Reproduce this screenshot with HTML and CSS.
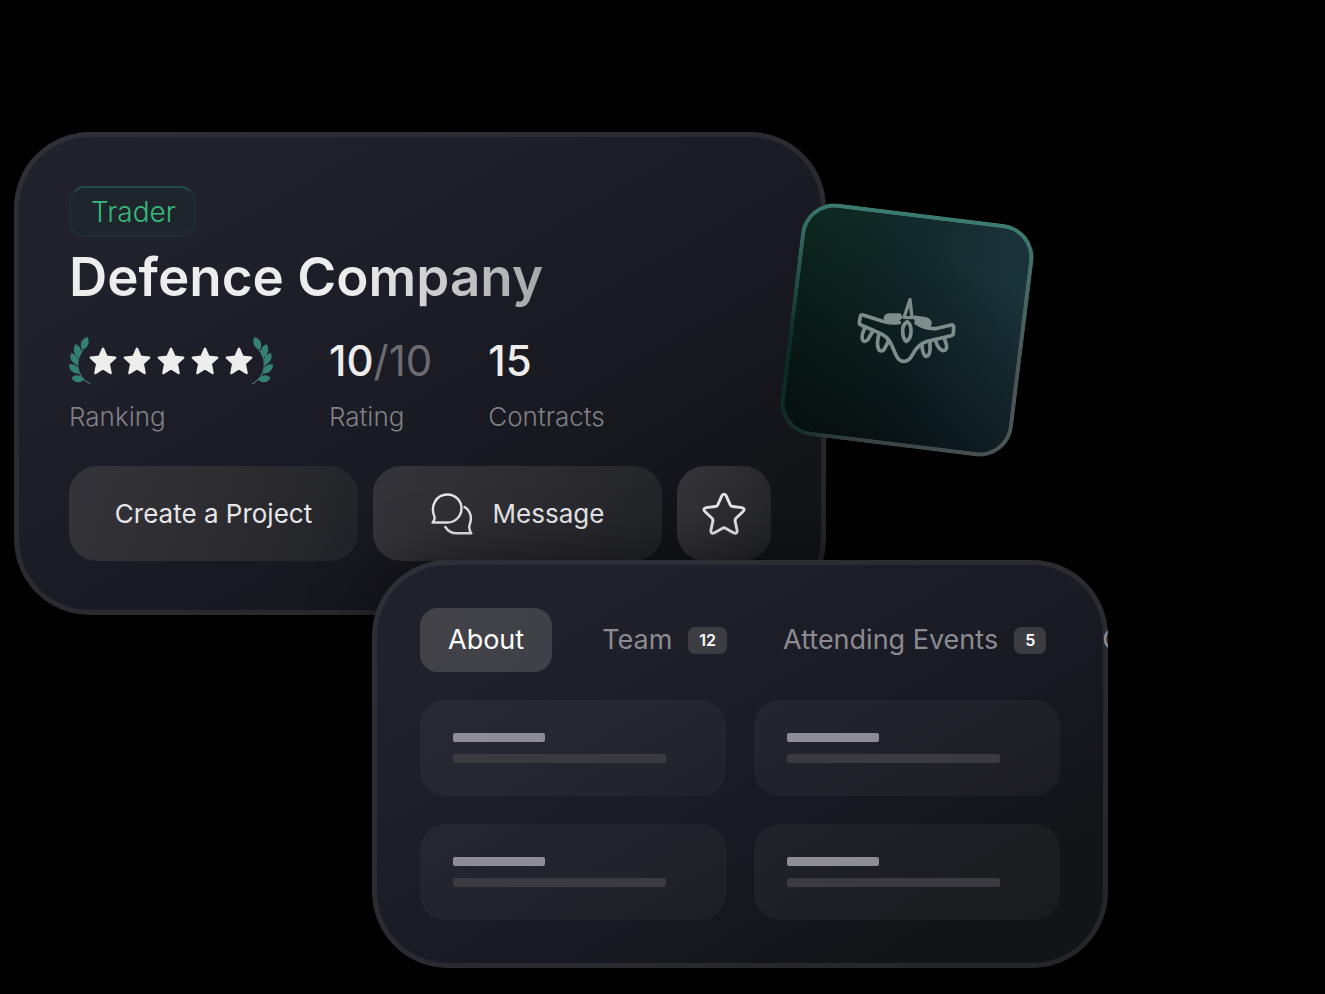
FILE: index.html
```html
<!DOCTYPE html>
<html lang="en">
<head>
    <meta charset="UTF-8">
    <meta name="viewport" content="width=device-width, initial-scale=1.0">
    <title>Defence Company</title>
    <link rel="stylesheet" href="styles.css">
</head>
<body>

    <!-- Shared shapes -->
    <svg class="defs" width="0" height="0" aria-hidden="true">
        <defs>
            <symbol id="star" viewBox="0 0 28 28">
                <path d="M14 1.8 L17.4 9.6 L26.2 10.6 L19.7 16.5 L21.6 26 L14 21.3 L6.4 26 L8.3 16.5 L1.8 10.6 L10.6 9.6 Z" fill="#ededee" stroke="#ededee" stroke-width="2.4" stroke-linejoin="round"/>
            </symbol>
            <symbol id="laurel" viewBox="0 0 22 48">
                <path d="M14 13 C6 22 6 39 21 47" fill="none" stroke="#4a6f6a" stroke-width="1.2"/>
                <g fill="#35816f">
                    <path d="M13 13 C10 6 13 1.500 18.500 0 C21 5 19.500 11 13 13 Z"/>
                    <path d="M10 21 C3.500 17 4 11 6.500 7 C12.500 10 14 15 10 21 Z"/>
                    <path d="M8.500 28.500 C1.500 25.500 0.500 20 2 16 C8 17.500 11 22 8.500 28.500 Z"/>
                    <path d="M10 36.500 C3 37 0 32 0 27.500 C6 26.500 10.500 30 10 36.500 Z"/>
                    <path d="M15 43 C10 47 5 45.500 2.500 41 C6 36.500 12 37.500 15 43 Z"/>
                </g>
            </symbol>
        </defs>
    </svg>

    <main class="showcase">

        <!-- Company Card -->
        <section class="card company">
            <span class="role">Trader</span>
            <h1><span>Defence Company</span></h1>

            <div class="stats">
                <div class="stat">
                    <div class="value ranking" role="img" aria-label="5 of 5 stars">
                        <svg width="22" height="48"><use href="#laurel"/></svg>
                        <div class="stars">
                            <svg width="28" height="28"><use href="#star"/></svg>
                            <svg width="28" height="28"><use href="#star"/></svg>
                            <svg width="28" height="28"><use href="#star"/></svg>
                            <svg width="28" height="28"><use href="#star"/></svg>
                            <svg width="28" height="28"><use href="#star"/></svg>
                        </div>
                        <svg class="flip" width="22" height="48"><use href="#laurel"/></svg>
                    </div>
                    <div class="label">Ranking</div>
                </div>
                <div class="stat">
                    <div class="value">10<span class="total">/10</span></div>
                    <div class="label">Rating</div>
                </div>
                <div class="stat">
                    <div class="value">15</div>
                    <div class="label">Contracts</div>
                </div>
            </div>

            <div class="actions">
                <button type="button">Create a Project</button>
                <button type="button">
                    <svg width="42" height="42" viewBox="0 0 42 42" fill="none" stroke="currentColor" stroke-width="2.4" stroke-linecap="round" stroke-linejoin="round">
                        <path d="M1.500 29.500 C3.500 27.500 4 25.500 3.400 23.500 C-1 13 5 1.500 16.500 1.500 C24.500 1.500 30.500 8 30.500 15.500 C30.500 23.500 24 29.500 16.500 29.500 Z"/>
                        <path d="M33.500 14 C39.500 17.500 41.500 25 38.500 32 C37.800 34.500 38.500 37.500 40.300 40.300 L26 40.300 C20.500 40.300 16.500 37.500 14.300 34"/>
                    </svg>
                    Message
                </button>
                <button type="button" class="favourite" aria-label="Add to favourites">
                    <svg width="44" height="44" viewBox="0 0 46 46" fill="none" stroke="currentColor" stroke-width="3" stroke-linejoin="round">
                        <path d="M20.700 4 Q23 0.500 25.300 4 L29.500 13.500 Q30.200 15 32 15.200 L41.500 16.300 Q45.500 17.200 43 20.300 L35.500 27.500 Q34.300 28.800 34.600 30.500 L36.700 40 Q37 44.300 33.300 42.800 L24.500 37.800 Q23 37 21.500 37.800 L12.700 42.800 Q9 44.300 9.300 40 L11.400 30.500 Q11.700 28.800 10.500 27.500 L3 20.300 Q0.500 17.200 4.500 16.300 L14 15.200 Q15.800 15 16.500 13.500 Z"/>
                    </svg>
                </button>
            </div>

            <!-- Tilted emblem over the card's right edge -->
            <div class="emblem">
                <svg width="130" height="90" viewBox="6 0 390 270" aria-hidden="true">
                    <g transform="rotate(-7 201 135)" fill="none" stroke="#7f8c8c" stroke-width="11" stroke-linejoin="round" stroke-linecap="round">
                        <path d="M178 112 Q152 117 128 109 L69 90 Q63 88 61 95 L58 111 Q57 117 63 120 L116 143 Q142 153 152 174 L168 210 Q177 230 192 229 Q207 229 218 208 Q234 178 262 169 L333 152 Q339 151 340 146 L341 126 Q341 119 334 120 L292 130 Q258 134 228 114"/>
                        <path d="M192 97 L210 44 L216 98 Z" stroke-width="10"/>
                        <path d="M136 99 Q138 90 150 90 L178 90 L182 97 L172 104 L142 105 Z" fill="#7f8c8c"/>
                        <path d="M224 97 L252 101 Q268 104 270 114 L267 124 L240 117 L230 107 Z" fill="#7f8c8c"/>
                        <path d="M202 110 C191 116 187 128 188 141 C189 156 194 166 199 170 C208 163 214 151 213 136 C213 123 209 115 202 110 Z"/>
                        <path d="M74 130 Q64 150 67 162 C70 172 80 170 84 163 L97 141"/>
                        <path d="M117 148 Q109 176 115 190 C119 201 129 200 134 190 Q143 176 145 166"/>
                        <path d="M246 182 C247 199 252 211 257 214 C265 215 269 207 270 195 L270 172"/>
                        <path d="M287 168 C292 185 300 194 309 197 C319 197 322 188 319 178 L313 160"/>
                    </g>
                </svg>
            </div>
        </section>

        <!-- Details Card -->
        <section class="card details">
            <nav class="tabs">
                <a class="tab active" href="#about">About</a>
                <a class="tab" href="#team">Team <span class="count">12</span></a>
                <a class="tab" href="#events">Attending Events <span class="count">5</span></a>
                <a class="tab" href="#contracts">C</a>
            </nav>
            <div class="tiles">
                <div class="tile"></div>
                <div class="tile"></div>
                <div class="tile"></div>
                <div class="tile"></div>
            </div>
        </section>

    </main>

</body>
</html>
```
FILE: styles.css
```css
* {
    box-sizing: border-box;
}

body {
    margin: 0;
    background-color: #000;
    color: #ededee;
    font-family: Inter, "Liberation Sans", sans-serif;
    font-size: 27px;
    line-height: 34px;
}

.defs {
    position: absolute;
}

/* Two overlapping cards share the middle column */
.showcase {
    display: grid;
    grid-template-columns: 358fr 454fr 282fr 217fr;
    padding: 132px 0 24px 14px;
    overflow: hidden;
}

.card {
    position: relative;
    isolation: isolate;
    border-radius: 76px;
    background: linear-gradient(150deg, #2f2f38, #2a2a30 50%, #242528);
}

.card::before {
    content: "";
    position: absolute;
    inset: 5px;
    z-index: -1;
    border-radius: 71px;
    background: linear-gradient(150deg, #21212c 20%, #1a1a23 55%, #131418 85%);
}

/* Company Card */
.company {
    grid-column: 1 / 3;
    grid-row: 1;
    padding: 54px 55px;
}

.role {
    display: inline-block;
    height: 51px;
    padding: 7px 18px 0 20px;
    border: 2px solid #1f2f31;
    border-top-color: #1f4f43;
    border-radius: 16px;
    background-color: #1e252c;
    color: #37bb7b;
    font-size: 28px;
    font-weight: 300;
    vertical-align: top;
}

h1 {
    margin: 8px 0 26px;
    font-size: 53px;
    font-weight: 600;
    line-height: 65px;
}

h1 span {
    background: linear-gradient(100deg, #ededee 60%, #a3a3a8);
    background-clip: text;
    -webkit-background-clip: text;
    color: transparent;
}

.stats {
    display: flex;
    gap: 56px;
}

.value {
    height: 50px;
    margin-bottom: 14px;
    font-size: 42px;
    font-weight: 500;
    line-height: 50px;
}

.total {
    color: #6b6b71;
    font-weight: 400;
}

.label {
    color: #808086;
    font-size: 26px;
    font-weight: 300;
}

.ranking {
    display: flex;
    align-items: center;
}

.stars {
    display: flex;
    gap: 6px;
    margin: 0 -2px;
}

.flip {
    transform: scaleX(-1);
}

.actions {
    display: flex;
    gap: 15px;
    margin-top: 32px;
}

.actions button {
    display: flex;
    flex: 1;
    align-items: center;
    justify-content: center;
    gap: 20px;
    height: 95px;
    padding: 0;
    border: none;
    border-radius: 28px;
    background: linear-gradient(110deg, #34343a, #2c2c31 50%, #222328);
    color: #e6e6e8;
    font: inherit;
    font-size: 26px;
    cursor: pointer;
}

.actions .favourite {
    flex: 0 0 94px;
}

/* Emblem */
.emblem {
    position: absolute;
    top: 81px;
    right: -198px;
    display: flex;
    align-items: center;
    justify-content: center;
    width: 234px;
    height: 234px;
    border: 4px solid transparent;
    border-radius: 34px;
    background:
        linear-gradient(200deg, transparent 20%, rgba(3, 5, 8, 0.75)) padding-box,
        linear-gradient(90deg, #0d2a20, #12292a 45%, #1b333b) padding-box,
        linear-gradient(180deg, #3b7b70, transparent 60%) border-box,
        linear-gradient(90deg, #0c2a24, #384041 35%, #4c5556) border-box;
    transform: rotate(7deg);
}

/* Details Card */
.details {
    grid-column: 2 / 4;
    grid-row: 2;
    margin-top: -55px;
    padding: 48px;
    overflow: hidden;
    box-shadow: 0 0 60px rgba(0, 0, 0, 0.5);
}

.tabs {
    display: flex;
    margin-bottom: 28px;
}

.tab {
    display: flex;
    flex: none;
    align-items: center;
    gap: 16px;
    height: 64px;
    padding: 0 28px;
    border-radius: 18px;
    color: #8b8b91;
    text-decoration: none;
    white-space: nowrap;
}

.tab.active {
    margin-right: 22px;
    background: linear-gradient(110deg, #424248, #404048);
    color: #fff;
}

.count {
    padding: 0 11px;
    border-radius: 7px;
    background-color: #3c3c43;
    color: #fff;
    font-size: 16px;
    font-weight: 600;
    line-height: 27px;
}

.tiles {
    display: grid;
    grid-template-columns: 1fr 1fr;
    gap: 28px;
}

.tile {
    height: 96px;
    padding: 33px;
    border-radius: 26px;
    background: linear-gradient(150deg, rgba(255, 255, 255, 0.04), rgba(255, 255, 255, 0.03));
}

.tile::before,
.tile::after {
    content: "";
    display: block;
    height: 9px;
    border-radius: 2px;
}

.tile::before {
    width: 92px;
    margin-bottom: 12px;
    background-color: #8e8d95;
}

.tile::after {
    width: 213px;
    max-width: 100%;
    background-color: #3a3a40;
}
```
